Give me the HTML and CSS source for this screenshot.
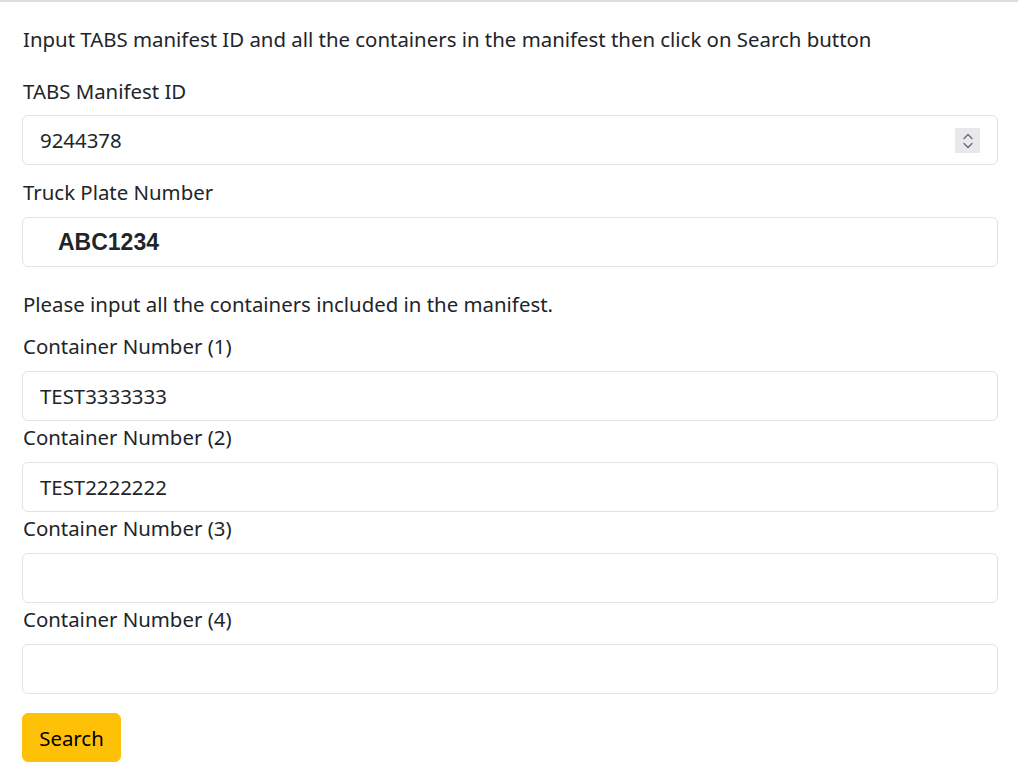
FILE: index.html
```html
<!DOCTYPE html>
<html lang="en">
<head>
<meta charset="utf-8">
<title>TABS Manifest Search</title>
<link rel="stylesheet" href="styles.css">
</head>
<body>
<div class="topline"></div>
<main class="page">
  <p class="intro">Input TABS manifest ID and all the containers in the manifest then click on Search button</p>

  <div class="field first">
    <label class="label" for="mid">TABS Manifest ID</label>
    <div class="number-wrap">
      <input class="input" id="mid" type="text" value="9244378">
      <span class="spinner" aria-hidden="true">
        <svg width="12" height="18" viewBox="0 0 12 18"><path d="M2 6.5 L6 2.5 L10 6.5" fill="none" stroke="#6b6b73" stroke-width="1.4" stroke-linecap="round" stroke-linejoin="round"/><path d="M2 11.5 L6 15.5 L10 11.5" fill="none" stroke="#6b6b73" stroke-width="1.4" stroke-linecap="round" stroke-linejoin="round"/></svg>
      </span>
    </div>
  </div>

  <div class="field">
    <label class="label" for="plate">Truck Plate Number</label>
    <input class="input plate" id="plate" type="text" value="ABC1234">
  </div>

  <p class="note">Please input all the containers included in the manifest.</p>

  <div class="containers">
    <label class="label" for="c1">Container Number (1)</label>
    <input class="input" id="c1" type="text" value="TEST3333333">
    <label class="label" for="c2">Container Number (2)</label>
    <input class="input" id="c2" type="text" value="TEST2222222">
    <label class="label" for="c3">Container Number (3)</label>
    <input class="input" id="c3" type="text" value="">
    <label class="label" for="c4">Container Number (4)</label>
    <input class="input" id="c4" type="text" value="">
  </div>

  <button class="btn" type="button">Search</button>
</main>
</body>
</html>
```

FILE: styles.css
```css
* { box-sizing: border-box; }

html, body {
  margin: 0;
  padding: 0;
  background: #ffffff;
}

body {
  font-family: "Noto Sans", "Open Sans", sans-serif;
  font-size: 20.4px;
  line-height: 30px;
  color: #212529;
}

.topline {
  height: 2px;
  background: #dcdcdc;
}

.page {
  padding: 22px 20px 20px 22px;
  display: flex;
  flex-direction: column;
}

.intro {
  margin: 0 0 22px 1px;
}

.field {
  display: flex;
  flex-direction: column;
  margin-bottom: 12px;
}

.label {
  display: block;
  margin: 0 0 10px 1px;
}

.field.first .label {
  margin-bottom: 9px;
}

.input {
  display: block;
  width: 100%;
  height: 50px;
  padding: 0 17px;
  font: inherit;
  color: #212529;
  background: #ffffff;
  border: 1px solid #dee2e6;
  border-radius: 6px;
  outline: none;
}

.number-wrap {
  position: relative;
}

.spinner {
  position: absolute;
  right: 18px;
  top: 13px;
  width: 25px;
  height: 25px;
  background: #e9e9ed;
  display: flex;
  align-items: center;
  justify-content: center;
}

.plate {
  padding-left: 35px;
  font-family: "Liberation Sans", Arial, sans-serif;
  font-weight: bold;
  font-size: 23px;
}

.note {
  margin: 10px 0 12px 1px;
}

.containers {
  display: flex;
  flex-direction: column;
}

.containers .input {
  margin-bottom: 1px;
}

.btn {
  align-self: flex-start;
  margin-top: 18px;
  width: 99px;
  height: 49px;
  padding: 0;
  font: inherit;
  color: #000000;
  background: #ffc107;
  border: 1px solid #ffc107;
  border-radius: 6px;
}
```
